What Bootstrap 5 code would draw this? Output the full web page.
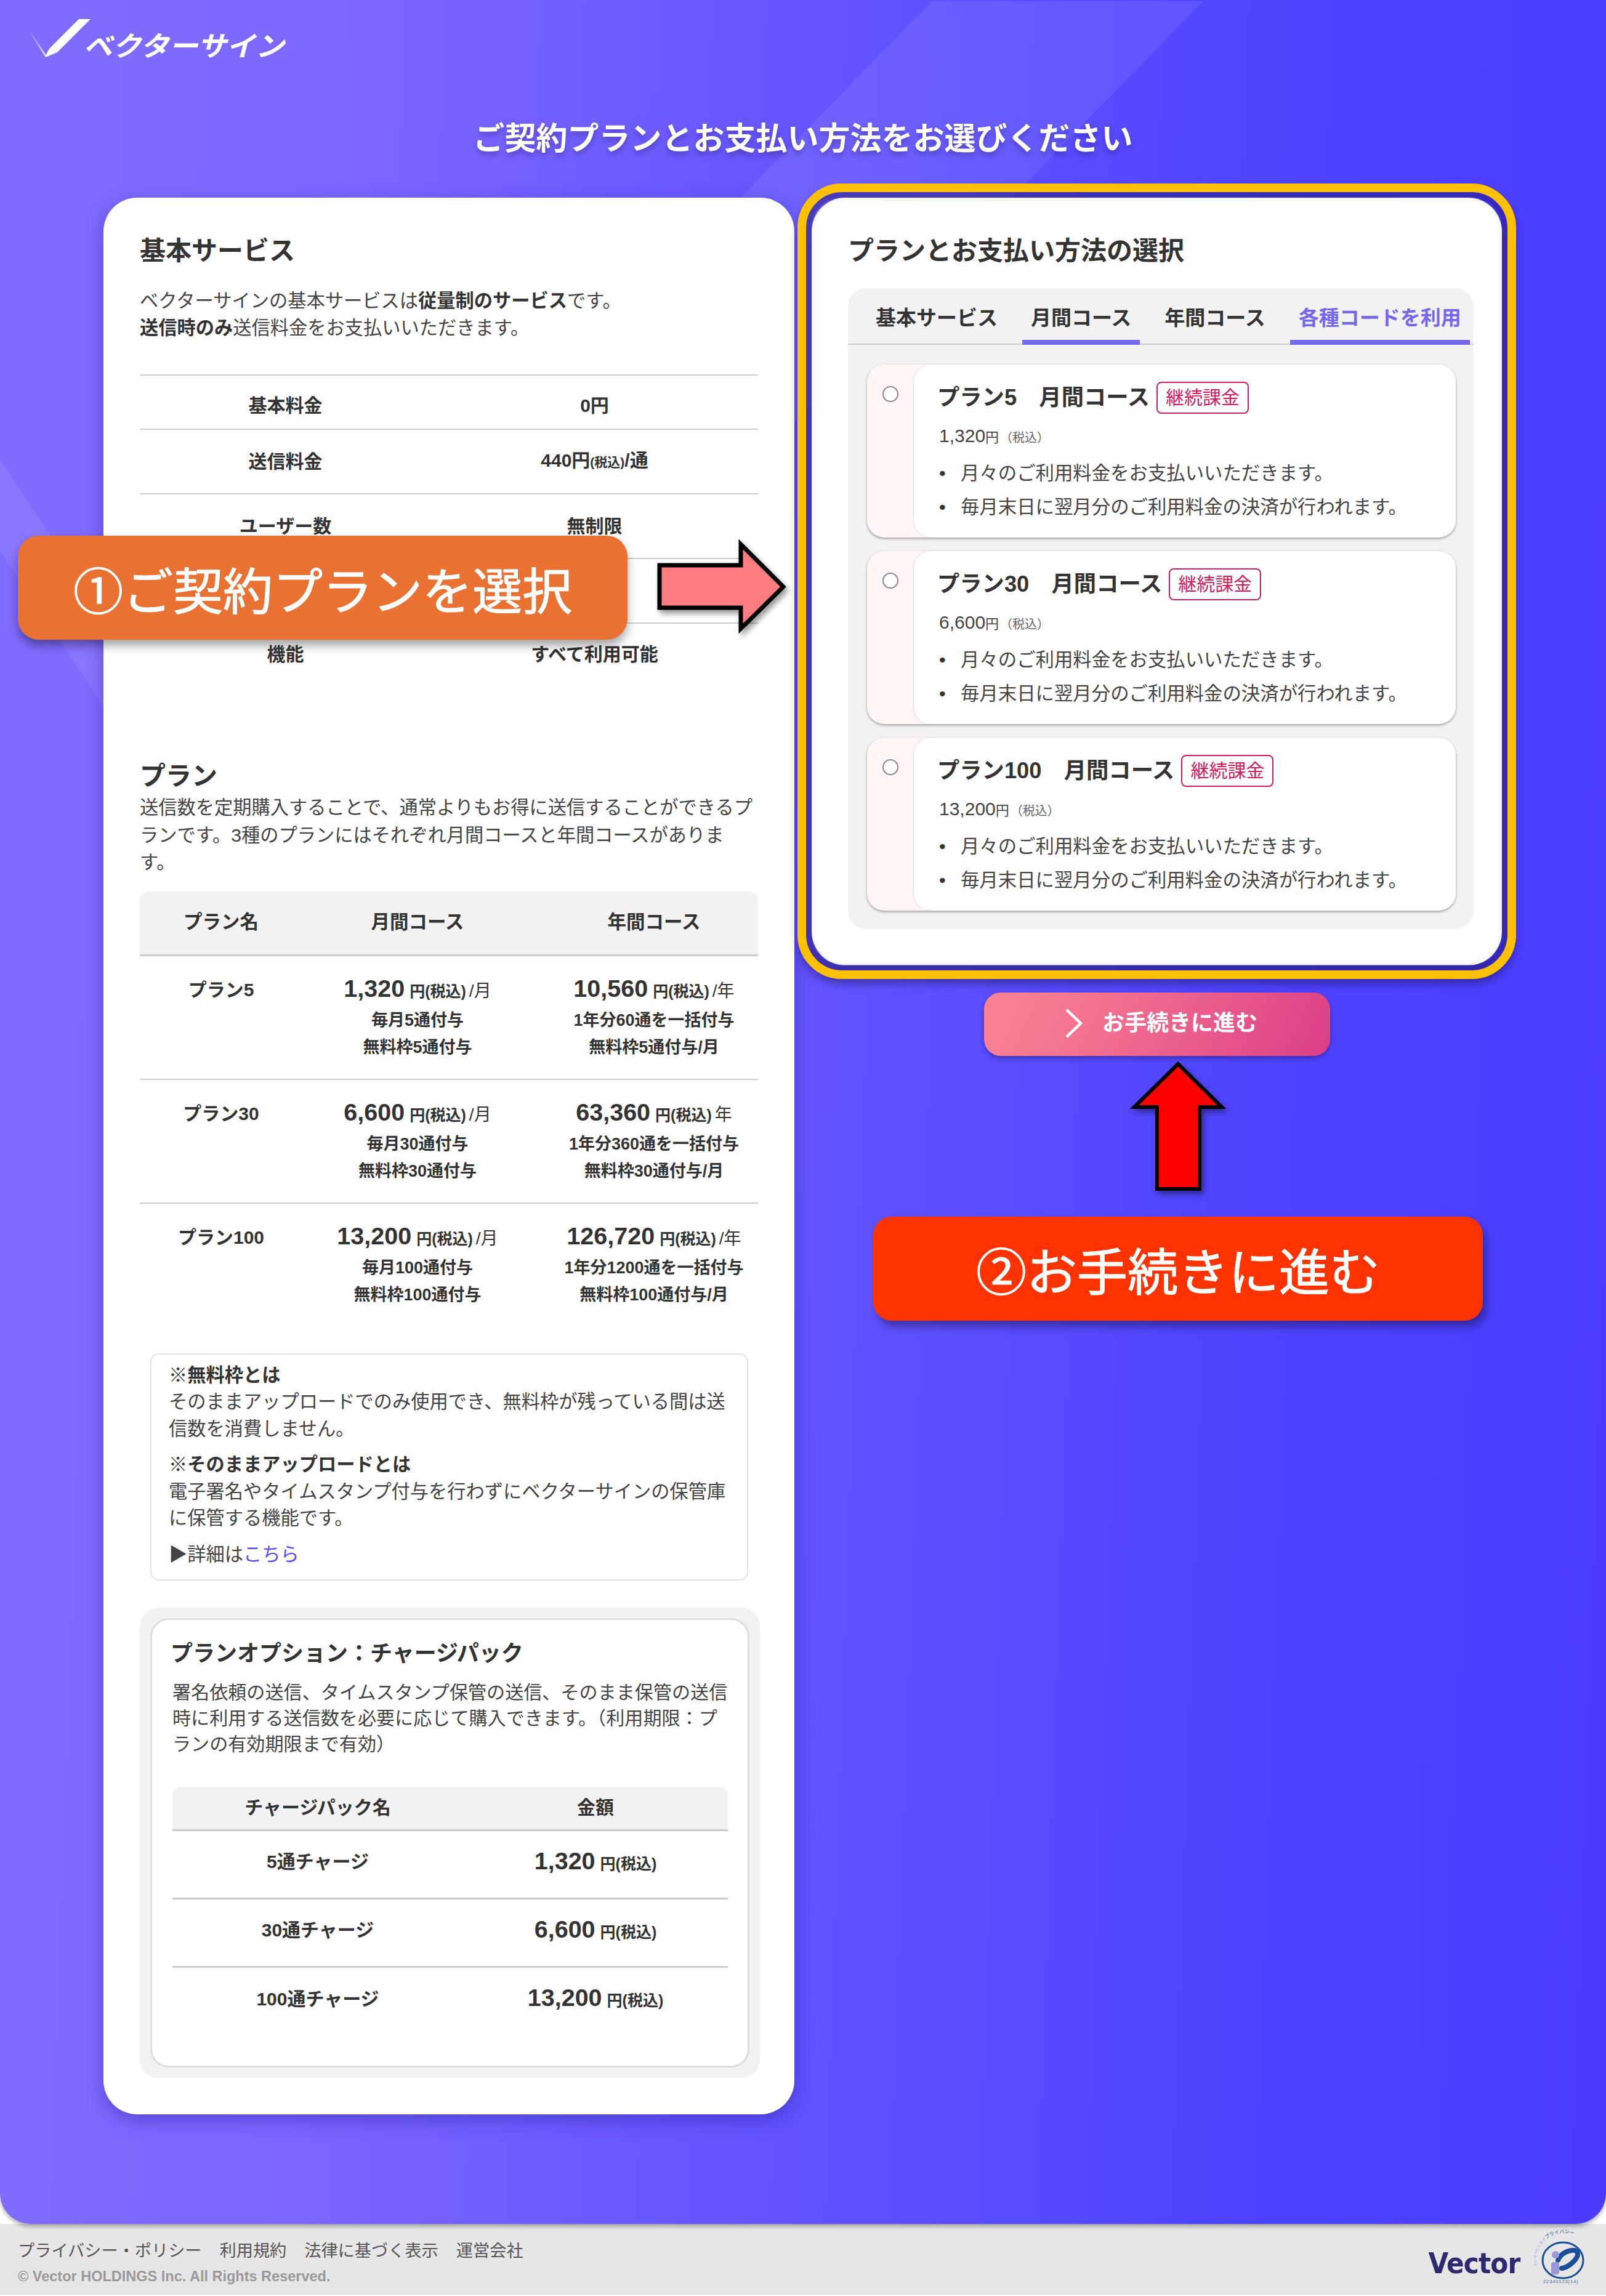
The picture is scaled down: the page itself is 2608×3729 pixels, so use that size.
<!DOCTYPE html>
<html lang="ja">
<head>
<meta charset="utf-8">
<title>ご契約プランとお支払い方法</title>
<link rel="stylesheet" href="https://cdn.jsdelivr.net/npm/bootstrap@5.3.0/dist/css/bootstrap.min.css">
<style>
:root{--jp:"Liberation Sans","Noto Sans CJK JP",sans-serif}
html,body{margin:0;background:#fff}
body{font-family:var(--jp);font-size:30.25px;line-height:44px;color:#444;width:2608px}
.hero{position:relative;height:3612px;border-radius:0 0 50px 50px;overflow:hidden;background:linear-gradient(92deg,#806cff 0%,#7c68ff 20%,#6b5aff 40%,#5044ff 75%,#4a3bff 100%);box-shadow:0 4px 6px rgba(0,0,0,.3)}
.deco-a,.deco-b{position:absolute;background:rgba(255,255,255,.08)}
.deco-a{left:800px;top:2px;width:1160px;height:700px;clip-path:polygon(713px 0,1153px 0,153px 1030px,0 1030px,0 733px)}
.deco-b{left:0;top:740px;width:170px;height:420px;clip-path:polygon(0 7px,170px 263px,170px 410px,0 155px)}
.brand{position:relative;height:110px;padding:31px 0 0 44px}
.brand-mark{width:105px;height:64px;display:block}
.brand-name{position:absolute;left:140px;top:40px;color:#fff;font-family:"Noto Sans CJK JP",sans-serif;font-weight:700;font-size:47px;line-height:64px;transform:skewX(-14deg) scaleY(.95);transform-origin:left center;white-space:nowrap}
.page-title{position:relative;margin:78px 0 57px;text-align:center;color:#fff;font-size:51px;line-height:76px;font-weight:700;text-shadow:0 6px 8px rgba(0,0,0,.25)}
.plan-shell{position:relative;gap:28px;padding-left:168px}
.sheet{background:#fff;border:0;border-radius:55px;box-shadow:0 10px 30px rgba(40,30,160,.45);padding:59px 59px 0;color:#444}
.sheet-left{width:1122px;height:3113px}
.sheet-right{width:1121px;height:1247px;position:relative}
.frame-mark{position:absolute;left:-23px;right:-23px;top:-23px;bottom:-22px;border:14px solid #ffc000;border-radius:72px;box-shadow:inset 0 0 0 9px rgba(40,28,130,.42),inset 0 0 10px 9px rgba(0,0,0,.12),0 8px 14px rgba(0,0,0,.3);pointer-events:none}
.sec-head{font-size:42px;line-height:50px;font-weight:700;color:#333;margin:3px 0 -3px}
.lede{margin:37px 0 53px;line-height:44px}
.lede b,.note-box b{color:#333}
.svc-table{width:1004px;table-layout:fixed;margin:0;--bs-table-bg:transparent;border-top:2px solid #ccc;color:#333;font-weight:700;font-size:30px}
.svc-table td{padding:0;border-bottom:2px solid #ccc;text-align:center;vertical-align:middle;height:105px;line-height:40px}
.svc-table tr:first-child td{height:88px;padding-top:12px}
.svc-table tr:last-child td{border-bottom:0;height:100px}
.svc-l{width:473px}
.tiny-tax{font-size:21px}
.gap-plan{margin-top:124px}
.plan-desc{margin:7px 0 24px;line-height:44.5px;white-space:nowrap}
.price-table{width:1004px;table-layout:fixed;margin:0;--bs-table-bg:transparent;color:#333;text-align:center}
.price-table th{background:#f2f2f2;height:104px;font-size:30.5px;border-bottom:3px solid #ccc;padding:0 0 4px;vertical-align:middle;font-weight:700;color:#333}
.price-table th:first-child{border-top-left-radius:14px}
.price-table th:last-child{border-top-right-radius:14px}
.price-table td{height:201px;vertical-align:top;padding:27px 0 0;border-bottom:2px solid #ccc;font-weight:700}
.price-table td.pname{padding-top:30px}
.price-table tr:last-child td{border-bottom:0}
.pc-a{width:264px}.pc-b{width:374px}.pc-c{width:366px}
.price-table th:nth-child(3),.price-table td:nth-child(3){padding-left:28px}
.pname{font-size:30px;line-height:50px}
.amt{line-height:50px;white-space:nowrap}
.big{font-size:39.5px;font-weight:700}
.yen{font-size:25px;font-weight:700;margin-left:8px}
.per{font-size:28px;font-weight:400;margin-left:5px}
.sub{font-size:27px;line-height:44px;white-space:nowrap}
.note-box{margin:43px 16px 0 17px;border:2px solid #e2e2e2;border-radius:14px;padding:12px 29px 17px 28px;height:369px;line-height:43.5px;white-space:nowrap}
.note-box p{margin:0 0 15px}
.note-box p:last-child{margin:1px 0 0}
.note-box a{color:#5a4dff;text-decoration:none}
.charge-wrap{margin:44px -3px 0 0;background:#f2f2f2;border-radius:30px;padding:17px;height:764px}
.charge-in{background:#fff;border:3px solid #ddd;border-radius:30px;height:730px;padding:32px 33px 0 30px}
.charge-head{font-size:36px;line-height:45px;font-weight:700;color:#333;margin:0}
.charge-desc{margin:20px 0 48px 3px;line-height:42px;font-size:30.1px;white-space:nowrap}
.fee-table{width:902px;margin-left:3px;table-layout:fixed;--bs-table-bg:transparent;color:#333;text-align:center;margin-bottom:0}
.fee-table th{background:#f2f2f2;height:71px;font-size:30px;font-weight:700;color:#333;border-bottom:3px solid #ccc;padding:0;vertical-align:middle}
.fee-table th:first-child{border-top-left-radius:14px}
.fee-table th:last-child{border-top-right-radius:14px}
.fee-table td{height:111px;padding:0 0 8px;vertical-align:middle;border-bottom:3px solid #ccc;font-weight:700;font-size:30px;line-height:50px}
.fee-table tr:last-child td{border-bottom:0}
.fc-a{width:472px}
.panel-wrap{margin-top:38px;width:1016px;height:1041px;background:#f2f2f2;border-radius:30px}
.tab-row{height:92px;padding-left:31px;gap:26px;border-bottom:2px solid #ccc;flex-wrap:nowrap}
.tab-item{font-size:33px;font-weight:700;color:#333;padding:26px 14px 0;height:92px;line-height:46px;border-bottom:8px solid transparent;white-space:nowrap;margin-bottom:-2px}
.tab-item.on-line{border-bottom-color:#7568ee}
.tab-item.on-text{color:#7568ee}
.plan-list{padding:32px 29px 0 31px;gap:22px}
.plan-pick{height:281px;background:#fff5f4;border-radius:28px;box-shadow:0 2px 4px rgba(0,0,0,.35);flex-direction:row}
.pick-side{width:76px;flex:none;text-align:center}
.pick-radio.form-check-input{width:26px;height:26px;margin:35px 0 0;border:2px solid #888;float:none}
.pick-body{flex:1;background:#fff;border-radius:28px;box-shadow:-1px 0 2px rgba(0,0,0,.12);padding:28px 0 0 38px}
.pick-title{height:52px;gap:11px;font-size:36.3px;line-height:52px;font-weight:700;color:#333;white-space:nowrap}
.renew-tag{height:52px;width:150px;border:2px solid #d81b60;border-radius:8px;color:#d81b60;font-size:30px;font-weight:400;line-height:48px;text-align:center;background:#fff}
.pick-price{margin:16px 0 10px 3px;line-height:40px;font-size:30px;color:#444;white-space:nowrap}
.pick-price .y{font-size:22px}
.pick-price .t{font-size:20px;color:#666;margin-left:2px}
.pick-list{margin:0;padding-left:38px;line-height:55px;font-size:30.4px;color:#444;list-style:none}
.pick-list li{white-space:nowrap}
.pick-list li::before{content:"•";display:inline-block;width:38px;margin-left:-38px;padding-left:3px;color:#333}
.go-row{margin-top:44px}
.go-btn{width:562px;height:103px;border:0;border-radius:27px;background:linear-gradient(115deg,#f98495 0%,#f2708f 35%,#dc3e88 100%);color:#fff;font-size:36px;font-weight:700;line-height:1;box-shadow:0 4px 8px rgba(0,0,0,.3);padding:0 0 3px 14px;gap:31px}
.go-btn svg{width:30px;height:50px}
.callout{position:absolute;width:990px;height:169px;color:#fff;line-height:169px;text-align:center;font-family:"Noto Sans CJK JP",sans-serif;white-space:nowrap;z-index:5;padding-bottom:6px;-webkit-text-stroke:1.2px #fff}
.callout-one{left:29px;top:870px;background:#e97132;border-radius:34px;box-shadow:0 10px 16px rgba(0,0,0,.35);font-size:81px}
.callout-two{left:1418px;top:1976px;background:#ff3300;border-radius:30px;box-shadow:6px 10px 14px rgba(0,0,0,.35);font-size:82px}
.arrow-mark{position:absolute;z-index:5;overflow:visible;filter:drop-shadow(4px 6px 5px rgba(0,0,0,.4))}
.arrow-one{left:1060px;top:868px;width:230px;height:170px}
.arrow-two{left:1820px;top:1715px;width:190px;height:235px}
.foot{height:115px;background:#e6e6e6;padding:26px 24px 0 29px}
.foot-links{gap:29px;font-size:27.2px;line-height:36px;color:#555}
.foot-copy{margin-top:8px;font-size:23.5px;line-height:30px;color:#999;font-weight:700;white-space:nowrap}
.vlogo{font-family:"DejaVu Sans",sans-serif;font-weight:700;font-size:47px;line-height:50px;color:#2e2a6e;transform:scaleX(.9);transform-origin:right center;letter-spacing:-1px;margin-right:26px;white-space:nowrap}
.pmark{width:90px;height:90px;display:block;margin-top:-14px;overflow:visible}
</style>
</head>
<body>
<div class="hero">
  <div class="deco-a"></div>
  <div class="deco-b"></div>
  <div class="brand">
    <svg class="brand-mark" viewBox="0 0 105 64" aria-hidden="true">
      <defs><linearGradient id="tail" x1="0" y1="0" x2="1" y2="1"><stop offset="0" stop-color="#fff" stop-opacity="0"/><stop offset="1" stop-color="#fff" stop-opacity=".85"/></linearGradient></defs>
      <polygon points="1,17 30,62 32,60 3,17" fill="url(#tail)"/>
      <path d="M84 0H103L49 54L30 62C32 54 35 49 38 46Z" fill="#fff"/>
    </svg>
    <span class="brand-name">ベクターサイン</span>
  </div>
  <h1 class="page-title">ご契約プランとお支払い方法をお選びください</h1>
  <div class="plan-shell d-flex align-items-start">
    <section class="card sheet sheet-left">
      <h2 class="sec-head">基本サービス</h2>
      <p class="lede">ベクターサインの基本サービスは<b>従量制のサービス</b>です。<br><b>送信時のみ</b>送信料金をお支払いいただきます。</p>
      <table class="table svc-table">
        <tr><td class="svc-l">基本料金</td><td>0円</td></tr>
        <tr><td>送信料金</td><td>440円<span class="tiny-tax">(税込)</span>/通</td></tr>
        <tr><td>ユーザー数</td><td>無制限</td></tr>
        <tr><td>&nbsp;</td><td>&nbsp;</td></tr>
        <tr><td>機能</td><td>すべて利用可能</td></tr>
      </table>
      <h2 class="sec-head gap-plan">プラン</h2>
      <p class="plan-desc">送信数を定期購入することで、通常よりもお得に送信することができるプ<br>ランです。3種のプランにはそれぞれ月間コースと年間コースがありま<br>す。</p>
      <table class="table price-table">
        <thead><tr><th class="pc-a">プラン名</th><th class="pc-b">月間コース</th><th class="pc-c">年間コース</th></tr></thead>
        <tbody>
          <tr><td class="pname">プラン5</td>
            <td><div class="amt"><span class="big">1,320</span><span class="yen">円(税込)</span><span class="per">/月</span></div><div class="sub">毎月5通付与</div><div class="sub">無料枠5通付与</div></td>
            <td><div class="amt"><span class="big">10,560</span><span class="yen">円(税込)</span><span class="per">/年</span></div><div class="sub">1年分60通を一括付与</div><div class="sub">無料枠5通付与/月</div></td></tr>
          <tr><td class="pname">プラン30</td>
            <td><div class="amt"><span class="big">6,600</span><span class="yen">円(税込)</span><span class="per">/月</span></div><div class="sub">毎月30通付与</div><div class="sub">無料枠30通付与</div></td>
            <td><div class="amt"><span class="big">63,360</span><span class="yen">円(税込)</span><span class="per">年</span></div><div class="sub">1年分360通を一括付与</div><div class="sub">無料枠30通付与/月</div></td></tr>
          <tr><td class="pname">プラン100</td>
            <td><div class="amt"><span class="big">13,200</span><span class="yen">円(税込)</span><span class="per">/月</span></div><div class="sub">毎月100通付与</div><div class="sub">無料枠100通付与</div></td>
            <td><div class="amt"><span class="big">126,720</span><span class="yen">円(税込)</span><span class="per">/年</span></div><div class="sub">1年分1200通を一括付与</div><div class="sub">無料枠100通付与/月</div></td></tr>
        </tbody>
      </table>
      <div class="note-box">
        <p><b>※無料枠とは</b><br>そのままアップロードでのみ使用でき、無料枠が残っている間は送<br>信数を消費しません。</p>
        <p><b>※そのままアップロードとは</b><br>電子署名やタイムスタンプ付与を行わずにベクターサインの保管庫<br>に保管する機能です。</p>
        <p>▶詳細は<a href="#">こちら</a></p>
      </div>
      <div class="charge-wrap">
        <div class="charge-in">
          <h3 class="charge-head">プランオプション&#65306;チャージパック</h3>
          <p class="charge-desc">署名依頼の送信、タイムスタンプ保管の送信、そのまま保管の送信<br>時に利用する送信数を必要に応じて購入できます。&#65288;利用期限&#65306;プ<br>ランの有効期限まで有効&#65289;</p>
          <table class="table fee-table">
            <thead><tr><th class="fc-a">チャージパック名</th><th>金額</th></tr></thead>
            <tbody>
              <tr><td>5通チャージ</td><td><span class="big">1,320</span><span class="yen">円(税込)</span></td></tr>
              <tr><td>30通チャージ</td><td><span class="big">6,600</span><span class="yen">円(税込)</span></td></tr>
              <tr><td>100通チャージ</td><td><span class="big">13,200</span><span class="yen">円(税込)</span></td></tr>
            </tbody>
          </table>
        </div>
      </div>
    </section>
    <div class="d-flex flex-column">
      <section class="card sheet sheet-right">
        <h2 class="sec-head">プランとお支払い方法の選択</h2>
        <div class="panel-wrap">
          <div class="nav tab-row">
            <span class="tab-item">基本サービス</span>
            <span class="tab-item on-line">月間コース</span>
            <span class="tab-item">年間コース</span>
            <span class="tab-item on-line on-text">各種コードを利用</span>
          </div>
          <div class="plan-list d-flex flex-column">
            <div class="card plan-pick border-0">
              <div class="pick-side"><input class="form-check-input pick-radio" type="radio" name="pl" aria-label="プラン5"></div>
              <div class="pick-body">
                <div class="pick-title d-flex align-items-center"><span>プラン5&#12288;月間コース</span><span class="renew-tag">継続課金</span></div>
                <div class="pick-price">1,320<span class="y">円</span><span class="t">&#65288;税込&#65289;</span></div>
                <ul class="pick-list"><li>月々のご利用料金をお支払いいただきます。</li><li>毎月末日に翌月分のご利用料金の決済が行われます。</li></ul>
              </div>
            </div>
            <div class="card plan-pick border-0">
              <div class="pick-side"><input class="form-check-input pick-radio" type="radio" name="pl" aria-label="プラン30"></div>
              <div class="pick-body">
                <div class="pick-title d-flex align-items-center"><span>プラン30&#12288;月間コース</span><span class="renew-tag">継続課金</span></div>
                <div class="pick-price">6,600<span class="y">円</span><span class="t">&#65288;税込&#65289;</span></div>
                <ul class="pick-list"><li>月々のご利用料金をお支払いいただきます。</li><li>毎月末日に翌月分のご利用料金の決済が行われます。</li></ul>
              </div>
            </div>
            <div class="card plan-pick border-0">
              <div class="pick-side"><input class="form-check-input pick-radio" type="radio" name="pl" aria-label="プラン100"></div>
              <div class="pick-body">
                <div class="pick-title d-flex align-items-center"><span>プラン100&#12288;月間コース</span><span class="renew-tag">継続課金</span></div>
                <div class="pick-price">13,200<span class="y">円</span><span class="t">&#65288;税込&#65289;</span></div>
                <ul class="pick-list"><li>月々のご利用料金をお支払いいただきます。</li><li>毎月末日に翌月分のご利用料金の決済が行われます。</li></ul>
              </div>
            </div>
          </div>
        </div>
        <div class="frame-mark"></div>
      </section>
      <div class="go-row d-flex justify-content-center">
        <button type="button" class="btn go-btn d-flex align-items-center justify-content-center">
          <svg viewBox="0 0 30 50" aria-hidden="true"><path d="M3 3L26 25L3 47" fill="none" stroke="#fff" stroke-width="4.5"/></svg>
          <span>お手続きに進む</span>
        </button>
      </div>
    </div>
  </div>
  <div class="callout callout-one">①ご契約プランを選択</div>
  <svg class="arrow-mark arrow-one" viewBox="0 0 230 170" aria-hidden="true"><polygon points="11,50 143,50 143,16 212,85 143,153 143,119 11,119" fill="#ff7c80" stroke="#000" stroke-width="7"/></svg>
  <svg class="arrow-mark arrow-two" viewBox="0 0 190 235" aria-hidden="true"><polygon points="93,13 164,83 128,83 128,216 59,216 59,83 22,83" fill="#ff0000" stroke="#000" stroke-width="6"/></svg>
  <div class="callout callout-two">②お手続きに進む</div>
</div>
<footer class="foot d-flex justify-content-between align-items-start">
  <div>
    <div class="foot-links d-flex"><span>プライバシー・ポリシー</span><span>利用規約</span><span>法律に基づく表示</span><span>運営会社</span></div>
    <div class="foot-copy">© Vector HOLDINGS Inc. All Rights Reserved.</div>
  </div>
  <div class="d-flex align-items-center">
    <div class="vlogo">Vector</div>
    <svg class="pmark" viewBox="0 0 90 90" aria-hidden="true">
      <ellipse cx="44" cy="47" rx="33" ry="29" fill="none" stroke="#1a4f9c" stroke-width="3"/>
      <path d="M36 47C41 33 62 27 67 33C72 42 55 58 42 60" fill="none" stroke="#1a4f9c" stroke-width="8" stroke-linecap="round"/>
      <circle cx="32" cy="38" r="6" fill="#9a98d8"/>
      <rect x="25" y="50" width="13" height="20" rx="4" fill="#9a98d8"/>
      <defs><path id="arc" d="M2 56A43 42 0 0 1 88 36"/></defs>
      <text font-size="6" font-family="Noto Sans CJK JP, sans-serif" fill="#9a98d8"><textPath href="#arc">たいせつにします<tspan fill="#1a4f9c" font-size="8">プライバシー</tspan></textPath></text>
      <text x="12" y="84" font-size="7.5" letter-spacing=".9" font-family="Liberation Sans, sans-serif" fill="#3a5ca8">22340123(14)</text>
    </svg>
  </div>
</footer>
<script src="https://cdn.jsdelivr.net/npm/bootstrap@5.3.0/dist/js/bootstrap.bundle.min.js"></script>
</body>
</html>
